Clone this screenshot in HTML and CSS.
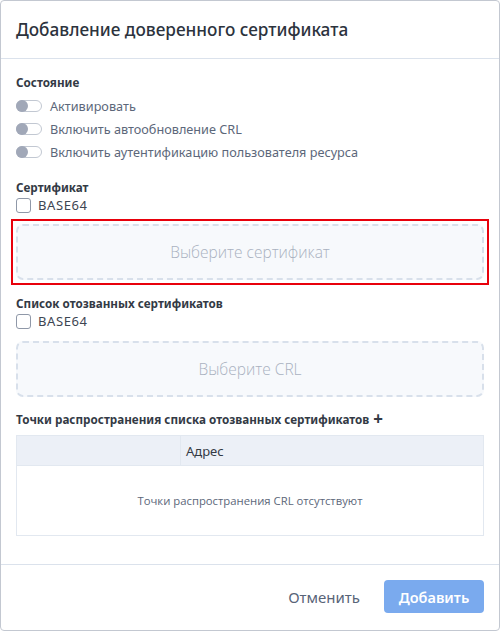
FILE: index.html
```html
<!DOCTYPE html>
<html lang="ru">
<head>
    <meta charset="UTF-8">
    <meta name="viewport" content="width=device-width, initial-scale=1.0">
    <title>Добавление доверенного сертификата</title>
    <link rel="stylesheet" href="styles.css">
</head>
<body>

    <div class="modal">
        <div class="modal-header">
            <h2>Добавление доверенного сертификата</h2>
        </div>

        <div class="modal-body">
            <div class="section-title">Состояние</div>
            <div class="toggles">
                <label class="toggle-row"><span class="toggle"></span>Активировать</label>
                <label class="toggle-row"><span class="toggle"></span>Включить автообновление CRL</label>
                <label class="toggle-row"><span class="toggle"></span>Включить аутентификацию пользователя ресурса</label>
            </div>

            <div class="section-title first-spaced">Сертификат</div>
            <label class="check-row"><span class="checkbox"></span>BASE64</label>
            <div class="highlight-frame">
                <div class="dropzone">Выберите сертификат</div>
            </div>

            <div class="section-title after-frame">Список отозванных сертификатов</div>
            <label class="check-row"><span class="checkbox"></span>BASE64</label>
            <div class="dropzone crl">Выберите CRL</div>

            <div class="section-title spaced">Точки распространения списка отозванных сертификатов <span class="plus">+</span></div>
            <div class="table">
                <div class="table-head">
                    <div class="col-first"></div>
                    <div class="col-addr">Адрес</div>
                </div>
                <div class="table-empty">Точки распространения CRL отсутствуют</div>
            </div>
        </div>

        <div class="modal-footer">
            <button class="btn-cancel">Отменить</button>
            <button class="btn-add">Добавить</button>
        </div>
    </div>

</body>
</html>
```

FILE: styles.css
```css
body {
    margin: 0;
    background-color: #ffffff;
    font-family: "Noto Sans", "Open Sans", sans-serif;
}

.modal {
    width: 500px;
    height: 631px;
    box-sizing: border-box;
    border: 1px solid #c3c8d1;
    border-radius: 4px;
    display: flex;
    flex-direction: column;
    background: #fff;
}

.modal-header {
    height: 57px;
    border-bottom: 1px solid #dbe2ec;
    display: flex;
    align-items: center;
    padding: 0 15px;
}

h2 {
    margin: 0;
    font-size: 17.2px;
    font-weight: 500;
    color: #2c333d;
}

.modal-body {
    padding: 14px 15px 0 15px;
    height: 506px;
    box-sizing: border-box;
    border-bottom: 1px solid #dbe2ec;
}

.section-title {
    font-size: 11.7px;
    font-weight: 700;
    line-height: 18px;
    color: #333a45;
    display: flex;
    align-items: center;
}

.section-title.first-spaced {
    margin-top: 15px;
}

.section-title.after-frame {
    margin-top: 9px;
}

.section-title.spaced {
    margin-top: 13px;
}

.plus {
    font-size: 17px;
    font-weight: 700;
    margin-left: 4px;
    line-height: 18px;
}

.toggles {
    margin-top: 3px;
}

.toggle-row {
    display: flex;
    align-items: center;
    height: 23px;
    font-size: 12.7px;
    color: #5c677a;
}

.toggle {
    width: 26px;
    height: 12px;
    box-sizing: border-box;
    border: 1px solid #c2c8d2;
    border-radius: 7px;
    margin-right: 8px;
    position: relative;
}

.toggle::before {
    content: "";
    position: absolute;
    left: -1px;
    top: -1px;
    width: 12px;
    height: 12px;
    border-radius: 50%;
    background-color: #a1a8b8;
}

.check-row {
    display: flex;
    align-items: center;
    height: 18px;
    font-size: 13px;
    letter-spacing: 0.6px;
    color: #3d4552;
}

.checkbox {
    width: 15px;
    height: 15px;
    box-sizing: border-box;
    border: 1px solid #8f98a8;
    border-radius: 3px;
    margin-right: 7px;
}

.highlight-frame {
    margin: 5px -5px 0 -5px;
    padding: 3px;
    border: 2px solid #e8000b;
}

.dropzone {
    height: 56px;
    box-sizing: border-box;
    border: 2px dashed #d8e0eb;
    border-radius: 7px;
    background-color: #f7f9fc;
    display: flex;
    align-items: center;
    justify-content: center;
    font-family: "Open Sans", sans-serif;
    font-size: 15.5px;
    font-weight: 300;
    color: #a9b1c0;
}

.dropzone.crl {
    margin-top: 11px;
}

.table {
    margin-top: 7px;
    border: 1px solid #e2e8f0;
}

.table-head {
    display: flex;
    height: 29px;
    background-color: #ecf0f7;
    border-bottom: 1px solid #e2e8f0;
    font-size: 13px;
    color: #333a45;
}

.col-first {
    width: 163px;
    border-right: 1px solid #e2e8f0;
}

.col-addr {
    display: flex;
    align-items: center;
    padding-left: 5px;
}

.table-empty {
    height: 69px;
    display: flex;
    align-items: center;
    justify-content: center;
    font-family: "Open Sans", sans-serif;
    font-size: 11.3px;
    color: #5c677a;
}

.modal-footer {
    flex: 1;
    display: flex;
    justify-content: flex-end;
    align-items: flex-start;
    padding: 15px 15px 0 0;
    gap: 8px;
}

.btn-cancel,
.btn-add {
    height: 33px;
    border: none;
    border-radius: 4px;
    font-family: "Noto Sans", sans-serif;
    font-size: 15px;
    cursor: pointer;
}

.btn-cancel {
    background: none;
    color: #586478;
    padding: 0 16px;
}

.btn-add {
    width: 100px;
    background-color: #7aaaee;
    color: #fff;
    font-size: 14.5px;
    font-weight: 600;
}
```
